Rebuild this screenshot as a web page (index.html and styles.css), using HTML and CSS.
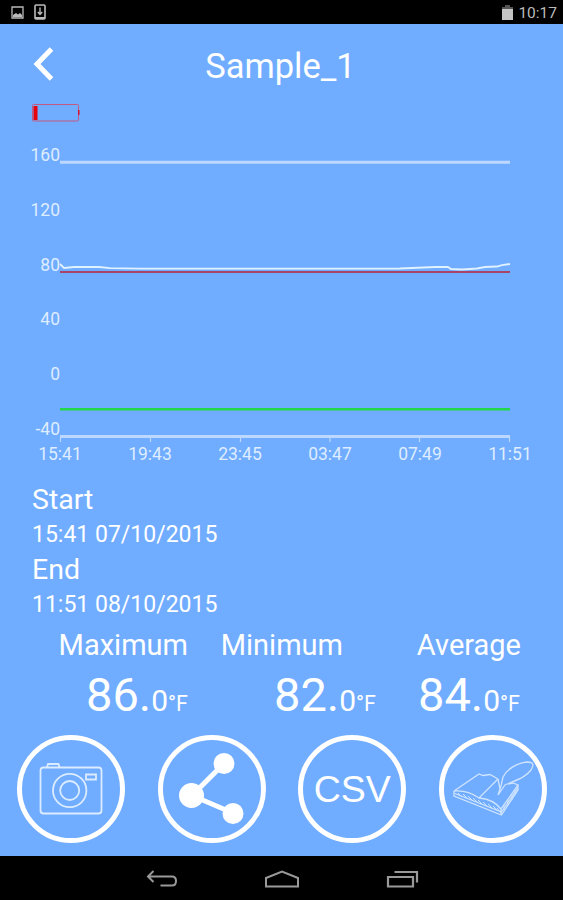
FILE: index.html
```html
<!DOCTYPE html>
<html lang="en">
<head>
    <meta charset="utf-8">
    <meta name="viewport" content="width=device-width">
    <title>Sample_1</title>
    <link rel="stylesheet" href="styles.css">
</head>
<body>

<div class="screen">
    <div class="status-bar">
        <div class="status-left">
            <svg width="13" height="13" viewBox="0 0 13 13">
                <path d="M1 1h11v11H1z" fill="none" stroke="#bbb" stroke-width="1.3"/>
                <path d="M2 11V9l3-2 2 1.5L9 7l2 2v2z" fill="#bbb"/>
            </svg>
            <svg width="12" height="16" viewBox="0 0 12 16">
                <rect x="1" y="1" width="10" height="14" rx="1" fill="none" stroke="#bbb" stroke-width="1.6"/>
                <path d="M1 13h10v2H1z" fill="#bbb"/>
                <path d="M6 3.5v6M3.8 8L6 10.5 8.2 8" fill="none" stroke="#bbb" stroke-width="1.4"/>
            </svg>
        </div>
        <div class="status-right">
            <svg width="11" height="15" viewBox="0 0 11 15">
                <path d="M3 0h5v2h3v3H0V2h3z" fill="#555"/>
                <path d="M0 4h11v11H0z" fill="#c4c4c4"/>
            </svg>
            <span class="clock">10:17</span>
        </div>
    </div>

    <div class="header">
        <svg class="back" width="22" height="36" viewBox="0 0 22 36">
            <path d="M18.5 3L4 18l14.5 15" fill="none" stroke="#fff" stroke-width="5"/>
        </svg>
        <h1 class="title">Sample_1</h1>
    </div>

    <svg class="battery" width="48" height="18" viewBox="0 0 48 18">
        <rect x="0.5" y="0.5" width="46" height="16.5" rx="1" fill="none" stroke="#c05a80"/>
        <path d="M1.5 2h4v14h-4z" fill="#e8000c"/>
        <path d="M46 6h1.5v5H46z" fill="#d8102c"/>
    </svg>

    <div class="chart">
        <div class="y-axis">
            <span>160</span>
            <span>120</span>
            <span>80</span>
            <span>40</span>
            <span>0</span>
            <span>-40</span>
        </div>
        <svg class="plot" width="450" height="300" viewBox="0 0 450 300">
            <path d="M0 22.2h450M0 296.5h450" stroke="#bcd8ff" stroke-width="3"/>
            <path d="M.5 296v6M90.5 296v6M180.5 296v6M270 296v6M359.5 296v6M449.5 296v6" stroke="#bcd8ff" stroke-width="1.2"/>
            <path d="M0 132h450" stroke="#a84468" stroke-width="2.2"/>
            <path d="M0 269.3h450" stroke="#22d74a" stroke-width="2.4"/>
            <path d="M0 124L4 128 14 127H39L50 128.2 80 128.7H180L340 128.5 375 127H388L391 129 402 129.5 417 128.5 425 127 437 126.5 442 125.2 450 124" fill="none" stroke="#e0f1ff" stroke-width="1.8"/>
        </svg>
        <div class="x-axis">
            <span>15:41</span>
            <span>19:43</span>
            <span>23:45</span>
            <span>03:47</span>
            <span>07:49</span>
            <span>11:51</span>
        </div>
    </div>

    <div class="times">
        <div class="label">Start</div>
        <div class="date">15:41 07/10/2015</div>
        <div class="label">End</div>
        <div class="date">11:51 08/10/2015</div>
    </div>

    <div class="stats">
        <div class="stat stat-max">
            <div class="stat-name">Maximum</div>
            <div class="stat-value">86.<span class="decimal">0</span><span class="unit">°F</span></div>
        </div>
        <div class="stat stat-min">
            <div class="stat-name">Minimum</div>
            <div class="stat-value">82.<span class="decimal">0</span><span class="unit">°F</span></div>
        </div>
        <div class="stat stat-avg">
            <div class="stat-name">Average</div>
            <div class="stat-value">84.<span class="decimal">0</span><span class="unit">°F</span></div>
        </div>
    </div>

    <div class="actions">
        <div class="round-button">
            <svg width="108" height="108" viewBox="0 0 108 108" fill="none" stroke="#dcecff" stroke-width="1.8">
                <rect x="23.5" y="32.5" width="61" height="46" rx="3"/>
                <path d="M30 32.5l1-3.5h10.5l1 3.5M69 39.5h10v5H69z"/>
                <circle cx="52.7" cy="55.5" r="16.7"/>
                <circle cx="52.7" cy="55.5" r="9.5"/>
            </svg>
        </div>
        <div class="round-button">
            <svg width="108" height="108" viewBox="0 0 108 108" fill="#fff">
                <path d="M66 28.5L34 60.5l42 18" fill="none" stroke="#fff" stroke-width="5"/>
                <circle cx="66" cy="28.5" r="10.5"/>
                <circle cx="33.5" cy="60.5" r="12.5"/>
                <circle cx="75" cy="78.5" r="10.5"/>
            </svg>
        </div>
        <div class="round-button">
            <span class="csv">CSV</span>
        </div>
        <div class="round-button">
            <svg width="108" height="108" viewBox="0 0 108 108" fill="none" stroke="#cfe4ff" stroke-width="1.3">
                <path d="M15 56l25-17 4 1.5 7-1 8 4.5M15 56q14-1 25 7l19-19M40 63q14 1 22 11l17-24-5-2-5 1"/>
                <path d="M15 56v5l47.5 19L79 55v-5M16 58.5l46.5 18.5L79 52.5M62 74v6"/>
                <path d="M19 58l4 4M24 59l5 5M29 61l5 5M34 63l5 5M39 65l5 5M44 67l5 5M49 69l5 5M54 71l5 5M58 73l4 5M65 70v5M69 65v5M73 60v5M76 55v5" stroke-width="1"/>
                <path d="M59 60l3-9 2-9c4-8 14-14 24-15 7 0 7 3 4 8-6 8-15 10-26 15l-7 10M61 54l-2-10"/>
            </svg>
        </div>
    </div>

    <div class="nav-bar">
        <svg width="32" height="20" viewBox="0 0 32 20" fill="none" stroke="#999" stroke-width="2">
            <path d="M7.5 1L2 6.5 7.5 12M2 6.5h24q4 0 4 4.5t-4 4.5H14.5"/>
        </svg>
        <svg width="36" height="20" viewBox="0 0 36 20" fill="none" stroke="#999" stroke-width="2">
            <path d="M2 16.5V8L18 1.5 34 8v8.5z"/>
        </svg>
        <svg width="34" height="20" viewBox="0 0 34 20" fill="none" stroke="#999" stroke-width="2.2">
            <path d="M2 7h25v9.5H2zM8.5 2H31v10.5"/>
        </svg>
    </div>
</div>

</body>
</html>
```
FILE: styles.css
```css
body {
    margin: 0;
    background: #000;
    font-family: Roboto, "Liberation Sans", sans-serif;
    color: #fff;
}

svg {
    display: block;
    flex: none;
}

.screen {
    display: flex;
    flex-direction: column;
    width: 563px;
    height: 900px;
    overflow: hidden;
    background: #70acff;
}

.status-bar {
    display: flex;
    justify-content: space-between;
    align-items: center;
    height: 24px;
    padding: 0 6px 0 11px;
    background: #000;
}

.status-left {
    display: flex;
    align-items: center;
    gap: 10px;
}

.status-right {
    display: flex;
    align-items: center;
    gap: 5px;
}

.clock {
    padding-top: 2px;
    font-size: 15.5px;
    line-height: 22px;
    color: #bbb;
}

.header {
    display: grid;
    grid-template-columns: 60px 1fr 60px;
    align-items: center;
    height: 80px;
}

.back {
    margin-left: 33px;
}

.title {
    margin: 0;
    padding: 4px 2px 0 0;
    font-size: 34.5px;
    font-weight: 400;
    line-height: 76px;
    text-align: center;
}

.battery {
    margin-left: 32px;
}

.chart {
    display: grid;
    grid-template-columns: 60px 450px;
    grid-template-rows: 300px 30px;
    margin-top: 18px;
    color: #deedff;
    font-size: 17.5px;
}

.y-axis {
    display: flex;
    flex-direction: column;
    text-align: right;
}

.y-axis span {
    flex: none;
    height: 54.8px;
    line-height: 31px;
}

/* the last label must not push the row taller */
.y-axis span:last-child {
    height: 26px;
}

.plot {
    overflow: visible;
}

.x-axis {
    grid-column: 1 / 3;
    display: flex;
    width: 540px;
    margin-left: 15px;
    line-height: 29px;
}

.x-axis span {
    width: 90px;
    text-align: center;
}

.times {
    margin: 12px 0 0 32px;
}

.label {
    height: 38px;
    font-size: 28.5px;
    line-height: 36px;
}

.date {
    height: 32px;
    font-size: 23px;
    line-height: 29px;
}

.stats {
    display: flex;
    height: 104px;
}

.stat {
    text-align: right;
}

.stat-max {
    width: 188px;
}

.stat-min {
    width: 188px;
}

.stat-avg {
    width: 145px;
}

.stat-name {
    height: 46px;
    font-size: 29px;
    line-height: 46px;
}

.stat-min .stat-name {
    margin-right: 33px;
}

.stat-value {
    font-size: 47px;
    line-height: 54px;
}

.stat-avg .stat-value {
    margin-right: 1px;
}

.decimal {
    font-size: 30px;
}

.unit {
    font-size: 21.5px;
}

.actions {
    display: flex;
    gap: 32.6px;
    padding-left: 17px;
    margin-top: 9px;
}

.round-button {
    display: flex;
    align-items: center;
    justify-content: center;
    box-sizing: border-box;
    width: 108px;
    height: 108px;
    border: 5px solid #fff;
    border-radius: 50%;
}

.csv {
    font-family: "Liberation Sans", Arial, sans-serif;
    font-size: 37.5px;
}

.nav-bar {
    display: flex;
    gap: 86px;
    align-items: center;
    box-sizing: border-box;
    height: 44px;
    margin-top: auto;
    padding: 4px 0 0 146px;
    background: #000;
}
```
